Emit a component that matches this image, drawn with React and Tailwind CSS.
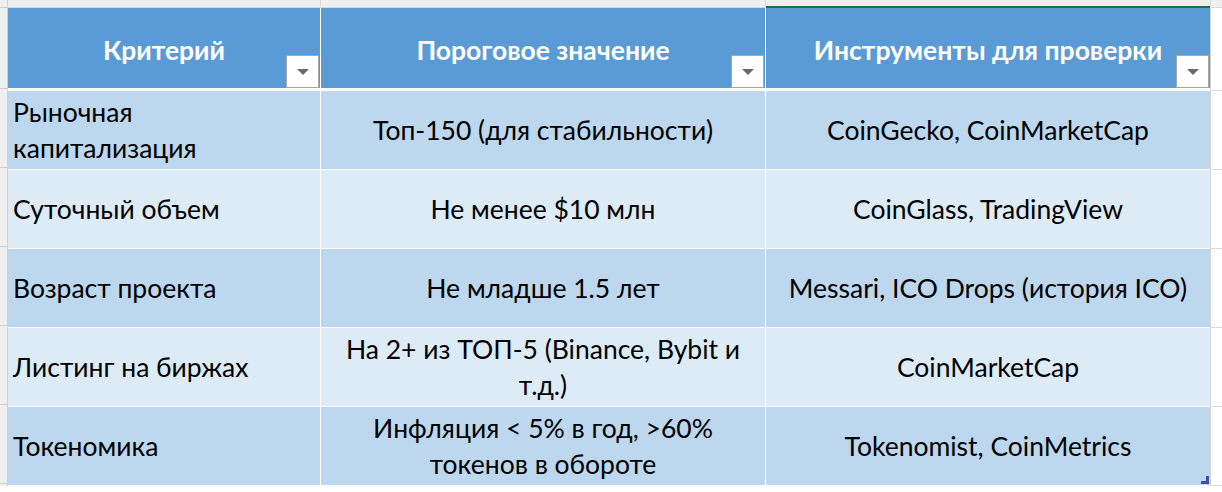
import React from "react";

const rows = [
  {
    name: ["Рыночная", "капитализация"],
    limit: ["Топ-150 (для стабильности)"],
    tools: "CoinGecko, CoinMarketCap",
    dark: true,
  },
  {
    name: ["Суточный объем"],
    limit: ["Не менее $10 млн"],
    tools: "CoinGlass, TradingView",
    dark: false,
  },
  {
    name: ["Возраст проекта"],
    limit: ["Не младше 1.5 лет"],
    tools: "Messari, ICO Drops (история ICO)",
    dark: true,
  },
  {
    name: ["Листинг на биржах"],
    limit: ["На 2+ из ТОП-5 (Binance, Bybit и", "т.д.)"],
    tools: "CoinMarketCap",
    dark: false,
  },
  {
    name: ["Токеномика"],
    limit: ["Инфляция < 5% в год, >60%", "токенов в обороте"],
    tools: "Tokenomist, CoinMetrics",
    dark: true,
  },
];

function FilterButton() {
  return (
    <div className="absolute right-px bottom-0 w-[33px] h-[33px] bg-white border border-[#a6a6a6] flex items-center justify-center">
      <svg width="14" height="8" viewBox="0 0 14 8">
        <polygon points="1,1 13,1 7,7" fill="#6b6b6b" />
      </svg>
    </div>
  );
}

function Lines({ lines }) {
  return (
    <div>
      {lines.map((l, i) => (
        <div key={i}>{l}</div>
      ))}
    </div>
  );
}

export default function App() {
  return (
    <div
      className="w-[1222px] h-[492px] bg-white overflow-hidden text-black"
      style={{ fontFamily: "Lato, 'Noto Sans', sans-serif" }}
    >
      {/* top column-header strip */}
      <div className="flex h-[8px]">
        <div className="w-[8px] bg-[#efefef] border-r border-b border-[#cfcfcf]" />
        <div className="w-[313px] bg-[#efefef] border-r border-b border-[#dadada]" />
        <div className="w-[445px] bg-[#efefef] border-r border-b border-[#dadada]" />
        <div className="w-[444px] bg-[#efefef] border-b-2 border-[#217346]" />
        <div className="flex-1 bg-[#efefef] border-l border-b border-[#dadada]" />
      </div>

      <div className="flex">
        {/* row-header strip */}
        <div className="w-[8px] flex flex-col bg-[#efefef] border-r border-[#cfcfcf]">
          <div className="h-[81px] border-b border-[#cfcfcf]" />
          {rows.map((r, i) => (
            <div key={i} className="h-[79px] border-b border-[#cfcfcf]" />
          ))}
        </div>

        {/* table */}
        <div className="w-[1202px] flex flex-col bg-white">
          <div className="grid grid-cols-[312px_444px_444px] gap-x-px h-[80px] mb-[3px] bg-white text-white font-bold text-[26.5px] leading-[36px]">
            {["Критерий", "Пороговое значение", "Инструменты для проверки"].map((h) => (
              <div key={h} className="relative bg-[#5b9bd5] flex items-center justify-center pt-[4px]">
                {h}
                <FilterButton />
              </div>
            ))}
          </div>

          {rows.map((r, i) => (
            <div
              key={i}
              className="grid grid-cols-[312px_444px_444px] gap-x-px h-[78px] mb-px text-[26.5px] leading-[36px]"
            >
              <div className={`flex items-center pl-[5px] ${r.dark ? "bg-[#bdd7ee]" : "bg-[#ddebf7]"}`}>
                <Lines lines={r.name} />
              </div>
              <div className={`flex items-center justify-center text-center ${r.dark ? "bg-[#bdd7ee]" : "bg-[#ddebf7]"}`}>
                <Lines lines={r.limit} />
              </div>
              <div className={`relative flex items-center justify-center text-center ${r.dark ? "bg-[#bdd7ee]" : "bg-[#ddebf7]"}`}>
                {r.tools}
                {i === rows.length - 1 && (
                  <svg className="absolute right-px bottom-px" width="8" height="8" viewBox="0 0 8 8">
                    <polygon points="8,0 8,8 0,8 0,5 5,5 5,0" fill="#3f51a3" />
                  </svg>
                )}
              </div>
            </div>
          ))}
        </div>

        {/* right blank column */}
        <div className="flex-1 flex flex-col border-l border-[#d4d4d4]">
          <div className="h-[83px] border-b border-[#dadada]" />
          {rows.map((r, i) => (
            <div key={i} className="h-[79px] border-b border-[#dadada]" />
          ))}
        </div>
      </div>
    </div>
  );
}
